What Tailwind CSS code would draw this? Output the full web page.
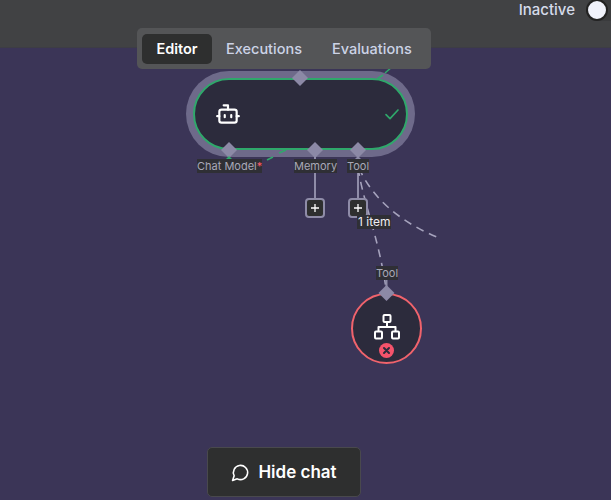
<!DOCTYPE html>
<html>
<head>
<meta charset="utf-8">
<script src="https://cdn.jsdelivr.net/npm/@tailwindcss/browser@4"></script>
</head>
<body class="w-[611px] h-[500px] overflow-hidden bg-[#3b3557] font-['Inter','Liberation_Sans',sans-serif]">
<div class="relative w-[611px] h-[500px] flex flex-col">
  <header class="h-[48px] bg-[#414244] border-b border-[#3d3d45] flex justify-end items-start shrink-0 overflow-hidden">
    <div class="flex items-start gap-[11px] -mr-[9px]">
      <span class="mt-[1px] text-[15px] leading-[18px] font-medium text-[#d5dbea]">Inactive</span>
      <span class="-mt-[2px] w-[34px] h-[23px] rounded-full bg-[#3a3b3d] flex items-center">
        <span class="w-[22px] h-[22px] rounded-full bg-[#f0f2fb] border-2 border-[#222]"></span>
      </span>
    </div>
  </header>
  <main class="relative flex-1">
    <svg class="absolute left-0 top-[-48px]" width="611" height="500" viewBox="0 0 611 500" fill="none">
      <path d="M315 157V198M358 157V198" stroke="#8f8ca8" stroke-width="2"/>
      <path d="M358 168 C364 205 378 235 386 288" stroke="#a6a3bd" stroke-width="1.6" stroke-dasharray="8 6"/>
      <path d="M359 168 C372 198 400 222 439 238" stroke="#a6a3bd" stroke-width="1.6" stroke-dasharray="8 6"/>
      <path d="M386.500 280V292" stroke="#8f8ca8" stroke-width="2"/>
    </svg>
    <div class="absolute left-[186px] top-[23px] w-[229px] h-[86px] rounded-full bg-[#6e6a8a] p-[7px]">
      <div class="w-full h-full rounded-full bg-[#2c2b3c] border-2 border-[#2fa86b] flex items-center justify-between pl-[20px] pr-[5px]">
        <svg width="26" height="26" viewBox="0 0 24 24" fill="none" stroke="#fff" stroke-width="2" stroke-linecap="round" stroke-linejoin="round"><path d="M12 8V4H8"/><rect x="4" y="8" width="16" height="12" rx="2"/><path d="M2 14h2M20 14h2M15 13v2M9 13v2"/></svg>
        <svg width="16" height="16" viewBox="0 0 24 24" fill="none" stroke="#2fa86b" stroke-width="2.500" stroke-linecap="round" stroke-linejoin="round" class="mr-[1px]"><path d="M3 13l6 6L21 6"/></svg>
      </div>
    </div>
    <svg class="absolute left-0 top-[-48px]" width="611" height="500" viewBox="0 0 611 500" fill="none">
      <path d="M267 160 L273 157 M279 153 L286 150" stroke="#2fa86b" stroke-width="1.6"/>
      <path d="M377 79 L383 75 M385 73 L392 67" stroke="#2fa86b" stroke-width="1.6"/>
      <g fill="#8c89a6">
        <path d="M300 70l8 8-8 8-8-8z"/>
        <path d="M229 142l8 8-8 8-8-8z"/>
        <path d="M315 142l8 8-8 8-8-8z"/>
        <path d="M358 142l8 8-8 8-8-8z"/>
        <path d="M358 156l4 4h-8z"/>
      </g>
      <path d="M229 156l4 4h-8z" fill="#2fa86b"/>
    </svg>
    <div class="absolute left-[137px] top-[-20px] w-[294px] h-[41px] bg-[#545557] rounded-[5px] flex items-center pl-[5px] text-[14.5px] font-medium text-[#ccd3e6]">
      <span class="w-[70px] h-[30px] rounded-[5px] bg-[#2e2f2f] text-white font-semibold flex items-center justify-center">Editor</span>
      <span class="ml-[14px]">Executions</span>
      <span class="ml-[30px]">Evaluations</span>
    </div>
    <span class="absolute left-[197px] top-[111px] h-[14px] bg-[#2f2f35] text-[11px] leading-[14px] text-[#a9a8b8]">Chat Model<span class="text-[#ff5a6a]">*</span></span>
    <span class="absolute left-[294px] top-[111px] h-[14px] bg-[#2f2f35] text-[11px] leading-[14px] text-[#a9a8b8]">Memory</span>
    <span class="absolute left-[347px] top-[111px] h-[14px] bg-[#2f2f35] text-[11px] leading-[14px] text-[#a9a8b8]">Tool</span>
    <div class="absolute left-[305px] top-[150px] w-[20px] h-[20px] rounded-[4px] bg-[#2e2f2f] border-2 border-[#8f8ca8] flex items-center justify-center">
      <svg width="10" height="10" viewBox="0 0 10 10" stroke="#fff" stroke-width="1.300"><path d="M5 1v8M1 5h8"/></svg>
    </div>
    <div class="absolute left-[348px] top-[150px] w-[20px] h-[20px] rounded-[4px] bg-[#2e2f2f] border-2 border-[#8f8ca8] flex items-center justify-center">
      <svg width="10" height="10" viewBox="0 0 10 10" stroke="#fff" stroke-width="1.300"><path d="M5 1v8M1 5h8"/></svg>
    </div>
    <span class="absolute left-[357px] top-[167px] h-[14px] px-[1px] bg-[#2f2f35] text-[12px] leading-[14px] text-[#f0eef2]">1 item</span>
    <span class="absolute left-[376px] top-[218px] h-[14px] bg-[#2f2f35] text-[11px] leading-[14px] text-[#a9a8b8]">Tool</span>
    <div class="absolute left-[351px] top-[245px] w-[71px] h-[71px] rounded-full bg-[#2c2b3c] border-2 border-[#f0636c] flex items-center justify-center">
      <svg class="-mt-[3px]" width="28" height="28" viewBox="0 0 28 28" fill="none" stroke="#fff" stroke-width="2" stroke-linejoin="round"><rect x="10.500" y="2" width="7" height="7" rx="1"/><rect x="2" y="18.500" width="7" height="7" rx="1"/><rect x="19" y="18.500" width="7" height="7" rx="1"/><path d="M14 9v5M5.500 18.500V14h17v4.500"/></svg>
      <span class="absolute left-[26px] top-[48px] w-[15px] h-[15px] rounded-full bg-[#f5536b] flex items-center justify-center">
        <svg width="9" height="9" viewBox="0 0 9 9" stroke="#2c2b3c" stroke-width="2" stroke-linecap="round"><path d="M2 2l5 5M7 2l-5 5"/></svg>
      </span>
    </div>
    <svg class="absolute left-0 top-[-48px]" width="611" height="500" viewBox="0 0 611 500"><path d="M386.500 285l8 8-8 8-8-8z" fill="#8c89a6"/></svg>
    <button class="absolute left-[207px] top-[399px] w-[154px] h-[50px] rounded-[5px] bg-[#2e2f2f] border border-[#49494d] flex items-center justify-center gap-[8px] text-[17px] font-semibold text-white">
      <svg width="19" height="19" viewBox="0 0 24 24" fill="none" stroke="#fff" stroke-width="2" stroke-linecap="round" stroke-linejoin="round"><path d="M7.900 20A9 9 0 1 0 4 16.100L2 22Z"/></svg>
      <span class="mt-[2px]">Hide chat</span>
    </button>
  </main>
</div>
</body>
</html>
